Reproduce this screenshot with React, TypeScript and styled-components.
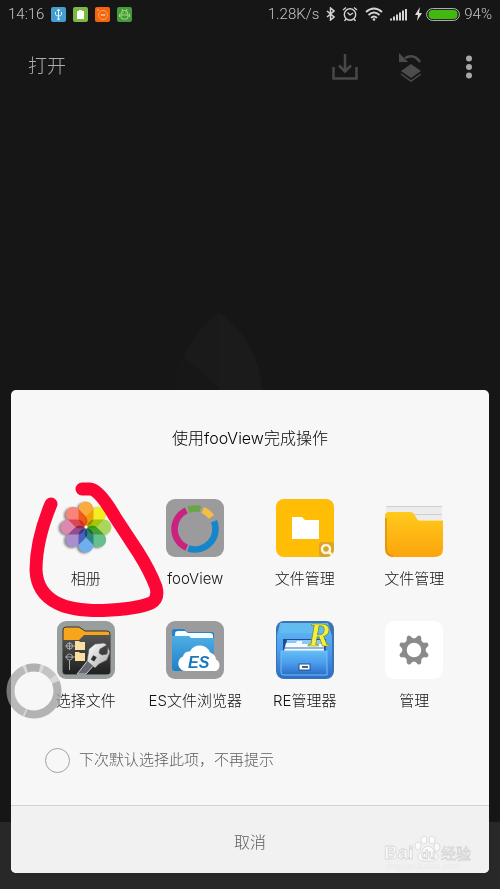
import React from "react";
import styled, { createGlobalStyle, css } from "styled-components";

const GlobalStyle = createGlobalStyle`
  * { box-sizing: border-box; }
  body {
    margin: 0;
    background: #161616;
    font-family: Inter, "Noto Sans CJK SC", "Noto Sans", sans-serif;
    font-weight: 300;
  }
  button, input { font: inherit; }
`;

const Screen = styled.div`
  min-height: 100vh;
  display: flex;
  flex-direction: column;
  background: #161616;
  position: relative;
  overflow: hidden;
`;

const StatusBar = styled.header`
  display: flex;
  align-items: center;
  justify-content: space-between;
  height: 28px;
  padding: 0 8px;
  color: #c4c4c4;
  font-family: Roboto, "Liberation Sans", sans-serif;
  font-size: 15px;
`;

const StatusGroup = styled.div<{ $gap: number }>`
  display: flex;
  align-items: center;
  gap: ${(p) => p.$gap}px;
  svg { display: block; }
`;

const Toolbar = styled.nav`
  display: flex;
  align-items: center;
  height: 78px;
  padding: 0 15px 0 28px;
`;

const OpenTitle = styled.h1`
  flex: 1;
  margin: 0;
  font-size: 19px;
  line-height: 28px;
  font-weight: 300;
  color: #acacac;
`;

const ToolButton = styled.button<{ $narrow?: boolean }>`
  width: ${(p) => (p.$narrow ? 32 : 40)}px;
  height: 40px;
  margin-left: ${(p) => (p.$narrow ? 22 : 26)}px;
  padding: 0;
  border: 0;
  background: none;
  display: flex;
  align-items: center;
  justify-content: center;
`;

const Canvas = styled.main`
  flex: 1;
  display: flex;
  justify-content: center;
  padding: 204px 62px 0 0;
`;

const BottomBar = styled.footer`
  height: 67px;
  background: #282828;
`;

const Overlay = styled.div`
  position: absolute;
  inset: 0;
  display: flex;
  flex-direction: column;
  justify-content: flex-end;
  padding: 0 11px 16px;
`;

const Dialog = styled.section`
  position: relative;
  background: #f7f7f7;
  border-radius: 5px;
`;

const DialogTitle = styled.h2`
  margin: 0;
  padding: 36px 0 49px;
  text-align: center;
  font-size: 16px;
  line-height: 24px;
  font-weight: 300;
  color: #000;
`;

const AppGrid = styled.div`
  display: grid;
  grid-template-columns: repeat(4, 1fr);
  row-gap: 32px;
  padding: 0 20px;
`;

const AppButton = styled.button`
  display: flex;
  flex-direction: column;
  align-items: center;
  gap: 12px;
  padding: 0;
  border: 0;
  background: none;
  color: #111;
  font-size: 15px;
  line-height: 20px;
  white-space: nowrap;
  svg { display: block; }
`;

const tile = css`
  width: 58px;
  height: 58px;
`;

const TileSvg = styled.svg`
  ${tile}
  overflow: visible;
`;

const Petal = styled.rect`
  mix-blend-mode: multiply;
`;

const Flower = styled.g`
  isolation: isolate;
  filter: drop-shadow(-2px 1px 1px rgba(0, 0, 0, 0.45));
`;

const Remember = styled.label`
  display: flex;
  align-items: center;
  gap: 9px;
  width: fit-content;
  margin: 36px 34px 32px;
  font-size: 15px;
  line-height: 26px;
  color: #5c5c5c;
`;

const RoundCheck = styled.input`
  appearance: none;
  width: 25px;
  height: 25px;
  margin: 0;
  border: 1px solid #a3a3a3;
  border-radius: 50%;
  &:checked { background: #a3a3a3; }
`;

const CancelButton = styled.button`
  display: block;
  width: 100%;
  height: 68px;
  padding: 4px 0 0;
  border: 0;
  border-top: 1px solid #d2d2d2;
  border-radius: 0 0 5px 5px;
  background: #f1f1f1;
  color: #5c5c5c;
  font-size: 16px;
  line-height: 24px;
`;

const Marker = styled.svg`
  position: absolute;
  left: 15px;
  top: 90px;
  pointer-events: none;
`;

const FloatingBall = styled.svg`
  position: absolute;
  left: -5px;
  bottom: 154px;
`;

const Watermark = styled.svg`
  position: absolute;
  right: 14px;
  bottom: 0;
  pointer-events: none;
`;

function arc(cx: number, cy: number, r: number, from: number, to: number) {
  const pt = (a: number) => {
    const t = ((a - 90) * Math.PI) / 180;
    return `${(cx + r * Math.cos(t)).toFixed(2)} ${(cy + r * Math.sin(t)).toFixed(2)}`;
  };
  return `M${pt(from)} A${r} ${r} 0 ${to - from > 180 ? 1 : 0} 1 ${pt(to)}`;
}

const petals = ["#f9ab40", "#f3ee22", "#a9d65c", "#68bf8e", "#6eb0ee", "#aa8ecd", "#de88b0", "#f8857a"];

const PhotosIcon = () => (
  <TileSvg viewBox="0 0 58 58">
    <Flower>
      {petals.map((c, i) => (
        <Petal key={c} x="21.500" y="2.500" width="15" height="24.500" rx="7.500" fill={c} transform={`rotate(${i * 45} 29 28)`} />
      ))}
      <circle cx="29" cy="28" r="1.500" fill="#fff" />
    </Flower>
  </TileSvg>
);

const FooViewIcon = () => (
  <TileSvg viewBox="0 0 58 58">
    <rect width="58" height="58" rx="9" fill="#9b9b9d" />
    <g fill="none" strokeWidth="6.500">
      <path d={arc(29, 30, 20.5, 204, 335)} stroke="#c9237f" />
      <path d={arc(29, 30, 20.5, 341, 375)} stroke="#69a545" />
      <path d={arc(29, 30, 20.5, 22, 54)} stroke="#f6bd43" />
      <path d={arc(29, 30, 20.5, 68, 199)} stroke="#1686ca" />
    </g>
  </TileSvg>
);

const YellowTileIcon = () => (
  <TileSvg viewBox="0 0 58 58">
    <defs>
      <clipPath id="yellowTile"><rect width="58" height="58" rx="8" /></clipPath>
    </defs>
    <rect width="58" height="58" rx="8" fill="#ffbd05" />
    <path d="M16 18h10l3 3h14v19H16z" fill="#fff" />
    <g clipPath="url(#yellowTile)">
      <rect x="43" y="43" width="15" height="15" rx="3" fill="#d9a52c" />
      <circle cx="50" cy="50" r="4" fill="none" stroke="#fff6dc" strokeWidth="2.5" />
      <path d="M53 53l4 4" stroke="#fff6dc" strokeWidth="2.5" />
    </g>
  </TileSvg>
);

const FolderIcon = () => (
  <TileSvg viewBox="0 0 58 58">
    <defs>
      <linearGradient id="folder" x2="0" y2="1">
        <stop stopColor="#ffca1c" /><stop offset="1" stopColor="#fca40c" />
      </linearGradient>
    </defs>
    <path d="M1 8h56v13H1z" fill="#ececec" />
    <path d="M1 7.500h56M22 15.500h35" stroke="#cfcfcf" />
    <path d="M0 17q0-4 4-4h21q3 0 4 2l3 5q1 1.500 3 1.500h23V50q0 8-9 8H9q-9 0-9-8z" fill="url(#folder)" />
    <path d="M1 19v30q0 7 7 8.500" fill="none" stroke="#d89112" strokeWidth="1.500" />
  </TileSvg>
);

const WrenchIcon = () => (
  <TileSvg viewBox="0 0 58 58">
    <defs>
      <linearGradient id="steel" x2="1" y2="1">
        <stop stopColor="#fff" /><stop offset="1" stopColor="#aaa" />
      </linearGradient>
      <linearGradient id="darkFolder" x2="0" y2="1">
        <stop stopColor="#555" /><stop offset="1" stopColor="#202020" />
      </linearGradient>
    </defs>
    <rect width="58" height="58" rx="9" fill="#989e9e" />
    <path d="M6 9q0-3 3-3h13l6 4h22q3 0 3 3v38q0 2-3 2H8q-2 0-2-2z" fill="#f7a51b" stroke="#333" />
    <path d="M6 19h16l5-5h26v37q0 2-3 2H8q-2 0-2-2z" fill="url(#darkFolder)" />
    <g fill="none" stroke="#aaa">
      <circle cx="12.500" cy="25" r="3" /><circle cx="12.500" cy="36" r="3" />
      <path d="M8 25h10M12.500 21v8M8 36h10M12.500 39v10" />
    </g>
    <path d="M18 20h4l1 1h5v8H18zM18 31h4l1 1h5v8H18z" fill="#f8dfa2" />
    <path d="M20 53l12-15 6 5-9 10z" fill="#676772" stroke="#c6c6cd" />
    <path d="M30 40l2-12 6-5 9-1 3 2-7 4-1 4 3 2 5-1 1-7 2 5-3 8-8 4-4 4z" fill="url(#steel)" stroke="#555" strokeWidth=".6" />
    <rect x="35" y="35" width="4" height="5" fill="#333" transform="rotate(30 37 37)" />
  </TileSvg>
);

const EsIcon = () => (
  <TileSvg viewBox="0 0 58 58">
    <defs>
      <linearGradient id="esBlue" x2="0" y2="1">
        <stop stopColor="#50aee4" /><stop offset="1" stopColor="#1e80c8" />
      </linearGradient>
    </defs>
    <rect width="58" height="58" rx="9" fill="#9b9b9d" />
    <path d="M6 10q0-2 2-2h10l3 3h25q2 0 2 2v35H9q-3 0-3-3z" fill="#2384c9" />
    <path d="M9 13q0-3 3-3h7l3 2h22q3 0 3 3v8H9z" fill="#f7fcff" />
    <path d="M6 15h17l2 2h23v31q0 2-2 2H9q-3 0-3-3z" fill="url(#esBlue)" />
    <path d="M20 50a7.500 7.500 0 0 1-3-14.500 6 6 0 0 1 7-5 11 11 0 0 1 20 1 8 8 0 0 1 6 7A6.500 6.500 0 0 1 50 50z" fill="#fff" />
    <text x="22" y="47" fontFamily="Liberation Sans, sans-serif" fontSize="16" fontWeight="700" fontStyle="italic" fill="#1979bd">ES</text>
  </TileSvg>
);

const ReIcon = () => (
  <TileSvg viewBox="0 0 58 58">
    <defs>
      <linearGradient id="cabinet" x2="0" y2="1">
        <stop stopColor="#62bdf5" /><stop offset=".5" stopColor="#4b9ced" /><stop offset="1" stopColor="#2a6fc8" />
      </linearGradient>
    </defs>
    <rect width="58" height="58" rx="8" fill="#3c73b4" />
    <path d="M4 2h48l4 13v37l-4 5H5l-4-5V14z" fill="url(#cabinet)" />
    <path d="M6 2h44l3 10H4z" fill="#62bcf0" />
    <path d="M7 18h43v14H7z" fill="#1c4e91" />
    <path d="M11 19h37v10H9z" fill="#90c6f6" />
    <path d="M10 22h10l1-2h5v3h22v7H8z" fill="#f4faff" />
    <path d="M8 27h42" stroke="#2d72bd" />
    <path d="M5 30h46v24H8q-3 0-3-3z" fill="url(#cabinet)" stroke="#77bff5" />
    <rect x="23" y="43" width="11" height="6" fill="#fff" stroke="#20558d" />
    <path d="M26 46h6" stroke="#48617c" strokeWidth="2" />
    <text x="32" y="25" fontFamily="Liberation Serif, serif" fontSize="34" fontStyle="italic" fontWeight="700" fill="#f5ed45" stroke="#6c8c24" strokeWidth=".7">R</text>
  </TileSvg>
);

const ManageIcon = () => (
  <TileSvg viewBox="0 0 58 58">
    <rect width="58" height="58" rx="9" fill="#fff" />
    <g fill="#8a8a8a">
      {[0, 1, 2, 3, 4, 5, 6, 7].map((i) => (
        <path key={i} d="M24.500 20l2-4q.5-2.500 2.500-2.500t2.500 2.500l2 4z" transform={`rotate(${22.5 + i * 45} 29 29)`} />
      ))}
      <circle cx="29" cy="29" r="9.500" fill="none" stroke="#8a8a8a" strokeWidth="4.500" />
    </g>
  </TileSvg>
);

const apps = [
  { name: "相册", Icon: PhotosIcon },
  { name: "fooView", Icon: FooViewIcon },
  { name: "文件管理", Icon: YellowTileIcon },
  { name: "文件管理", Icon: FolderIcon },
  { name: "选择文件", Icon: WrenchIcon },
  { name: "ES文件浏览器", Icon: EsIcon },
  { name: "RE管理器", Icon: ReIcon },
  { name: "管理", Icon: ManageIcon },
];

const NoticeIcons = () => (
  <>
    <svg width="15" height="15" viewBox="0 0 15 15">
      <rect width="15" height="15" rx="2" fill="#449ece" />
      <path d="M7.500 3v9M4.500 5v2.500q0 1.500 3 1.500t3-1.500V5M6 4l1.500-2L9 4" fill="none" stroke="#e4f4fc" />
      <circle cx="7.500" cy="12" r="1.200" fill="#e4f4fc" />
    </svg>
    <svg width="15" height="15" viewBox="0 0 15 15">
      <rect width="15" height="15" rx="2" fill="#7cb944" />
      <path d="M6 3h3v1h2v8H4V4h2z" fill="#fff" />
    </svg>
    <svg width="15" height="15" viewBox="0 0 15 15">
      <rect width="15" height="15" rx="2" fill="#f4640c" />
      <circle cx="8" cy="8" r="4.500" fill="none" stroke="#ffb378" strokeWidth=".8" />
      <path d="M2 3h2M5.500 7.500h5M6 8.500h4" stroke="#ffb378" />
    </svg>
    <svg width="15" height="15" viewBox="0 0 15 15">
      <rect width="15" height="15" rx="2" fill="#46983f" />
      <path d="M4 7a3.500 3.500 0 0 1 7 0v3q0 2-2 2H6q-2 0-2-2zM4 8h7M5 2l1 2M10 2L9 4M2.500 7v3M12.500 7v3" fill="none" stroke="#a9e47b" strokeWidth=".9" />
      <path d="M5.500 6h1M8.500 6h1" stroke="#a9e47b" />
    </svg>
  </>
);

const SystemIcons = () => (
  <>
    <svg width="9" height="14" viewBox="0 0 9 14">
      <path d="M1 4l7 6-3.500 3V1L8 4l-7 6" fill="none" stroke="#d4d4d4" strokeWidth="1.500" />
    </svg>
    <svg width="16" height="16" viewBox="0 0 16 16">
      <circle cx="8" cy="8.500" r="5.700" fill="none" stroke="#d4d4d4" strokeWidth="1.400" />
      <path d="M5.500 6.500L8 9l3-2M1 4l3-2.500M15 4l-3-2.500M4 13l-1.500 2M12 13l1.500 2" fill="none" stroke="#d4d4d4" strokeWidth="1.300" />
    </svg>
    <svg width="18" height="14" viewBox="0 0 18 14">
      <g fill="none" stroke="#d4d4d4" strokeWidth="1.800">
        <path d="M1 5q8-7 16 0M3.500 8q5.500-5 11 0M6 10.800q3-2.700 6 0" />
      </g>
      <circle cx="9" cy="12.500" r="1.300" fill="#d4d4d4" />
    </svg>
    <svg width="18" height="13" viewBox="0 0 18 13">
      <path d="M1 12.500v-2M4 12.500v-4M7 12.500v-6M10 12.500v-8M13 12.500v-10M16 12.500V1" stroke="#d4d4d4" strokeWidth="2" />
    </svg>
  </>
);

export default function App() {
  return (
    <>
      <GlobalStyle />
      <Screen>
        <StatusBar>
          <StatusGroup $gap={7}>
            <span>14:16</span>
            <NoticeIcons />
          </StatusGroup>
          <StatusGroup $gap={7}>
            <span>1.28K/s</span>
            <SystemIcons />
            <StatusGroup $gap={4}>
              <svg width="7" height="14" viewBox="0 0 7 14">
                <path d="M5 0L0 8h3l-1 6 5-8H4z" fill="#ddd" />
              </svg>
              <svg width="34" height="13" viewBox="0 0 34 13">
                <rect x=".6" y=".6" width="32.800" height="11.800" rx="5.900" fill="none" stroke="#bdbdbd" />
                <rect x="2.500" y="2" width="29" height="9" rx="4" fill="#42b911" />
              </svg>
              <span>94%</span>
            </StatusGroup>
          </StatusGroup>
        </StatusBar>

        <Toolbar>
          <OpenTitle>打开</OpenTitle>
          <ToolButton aria-label="保存">
            <svg width="26" height="28" viewBox="0 0 26 28">
              <path d="M1.500 14v11.500h23V14M13 1v17M7 12.500l6 6 6-6" fill="none" stroke="#484848" strokeWidth="2.500" />
            </svg>
          </ToolButton>
          <ToolButton aria-label="撤销">
            <svg width="26" height="30" viewBox="0 0 26 30">
              <path d="M7 6q9-5 15 4" fill="none" stroke="#4c4c4c" strokeWidth="2.500" />
              <path d="M1 1v9h9z" fill="#4c4c4c" />
              <path d="M13 12l10 7-10 7-10-7z" fill="#4c4c4c" />
              <path d="M3 22l10 7 10-7" fill="none" stroke="#4c4c4c" strokeWidth="1.500" />
            </svg>
          </ToolButton>
          <ToolButton $narrow aria-label="更多">
            <svg width="8" height="24" viewBox="0 0 8 24" fill="#a8a8a8">
              <circle cx="4" cy="3.500" r="3" /><circle cx="4" cy="12" r="3" /><circle cx="4" cy="20.500" r="3" />
            </svg>
          </ToolButton>
        </Toolbar>

        <Canvas>
          <svg width="92" height="92" viewBox="0 0 92 92">
            <path d="M46 2Q2 35 2 92h44z" fill="#1a1a1a" />
            <path d="M46 2q44 33 44 90H46z" fill="#1b1b1b" />
            <path d="M12 48l34 30v14H2Q2 65 12 48z" fill="#171717" />
          </svg>
        </Canvas>
        <BottomBar />

        <Overlay>
          <Dialog role="dialog" aria-labelledby="chooser-title">
            <DialogTitle id="chooser-title">使用fooView完成操作</DialogTitle>
            <AppGrid>
              {apps.map(({ name, Icon }, i) => (
                <AppButton key={i}>
                  <Icon />
                  <span>{name}</span>
                </AppButton>
              ))}
            </AppGrid>
            <Remember>
              <RoundCheck type="checkbox" />
              <span>下次默认选择此项，不再提示</span>
            </Remember>
            <CancelButton>取消</CancelButton>

            <Marker width="140" height="142" viewBox="26 480 140 142">
              <path
                d="M51 504Q36 540 36 570Q37 593 57 603Q72 611 103 610.500Q137 609 151 603Q159 599 156 587Q150 571 138 552L115 517Q99 489 90 489L82 489"
                fill="none" stroke="#fb0635" strokeWidth="13" strokeLinecap="round" strokeLinejoin="round"
              />
            </Marker>

            <FloatingBall width="56" height="56" viewBox="0 0 56 56">
              <circle cx="28" cy="28" r="23.500" fill="none" stroke="#b4b4b4" strokeOpacity=".45" strokeWidth="8" />
              <g fill="none" stroke="#949494" strokeWidth="8">
                <path d={arc(28, 28, 23.5, 204, 335)} strokeOpacity=".45" />
                <path d={arc(28, 28, 23.5, 342, 374)} strokeOpacity=".6" />
                <path d={arc(28, 28, 23.5, 22, 54)} strokeOpacity=".3" />
                <path d={arc(28, 28, 23.5, 68, 200)} strokeOpacity=".55" />
              </g>
            </FloatingBall>

            <Watermark width="92" height="40" viewBox="0 0 92 40" fill="#fbfbfb" stroke="#d5d5d5" strokeWidth=".8">
              <text x="1" y="26" fontFamily="Liberation Sans, sans-serif" fontSize="19" fontWeight="700">Bai</text>
              <ellipse cx="35" cy="13" rx="3" ry="4" />
              <ellipse cx="41" cy="7" rx="3" ry="4" />
              <ellipse cx="49" cy="7" rx="3" ry="4" />
              <ellipse cx="54" cy="14" rx="3" ry="4" />
              <path d="M45 13q4 0 7 6 5 4 2 7-2 3-9 2-7 1-9-2-3-3 2-7 3-6 7-6z" />
              <text x="38" y="26" fontFamily="Liberation Sans, sans-serif" fontSize="12" fontWeight="700">du</text>
              <text x="58" y="26" fontFamily="Noto Sans CJK SC, sans-serif" fontSize="15" fontWeight="400">经验</text>
              <text x="4" y="36" fontFamily="Liberation Sans, sans-serif" fontSize="9" fill="#e9e9e9" stroke="none">jingyan.baidu.com</text>
            </Watermark>
          </Dialog>
        </Overlay>
      </Screen>
    </>
  );
}
